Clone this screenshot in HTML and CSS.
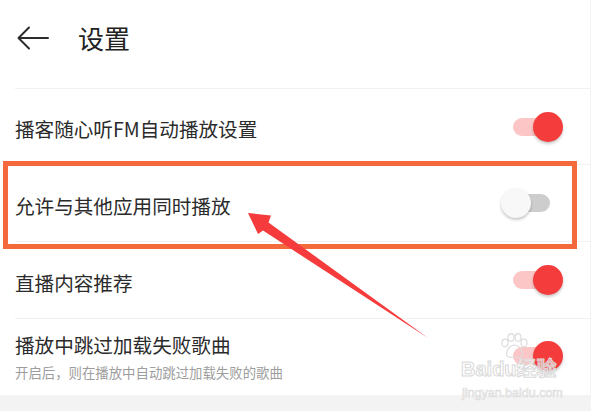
FILE: index.html
```html
<!DOCTYPE html>
<html lang="zh-CN">
<head>
<meta charset="utf-8">
<link rel="stylesheet" href="styles.css">
</head>
<body>
<div class="page">
  <header class="header">
    <svg class="back" width="32" height="24" viewBox="0 0 32 24">
      <path d="M31 12H2 M12 1.5L1.5 12L12 22.5" fill="none" stroke="#2b2b2b" stroke-width="2" stroke-linecap="round" stroke-linejoin="round"/>
    </svg>
    <h1 class="title">设置</h1>
  </header>
  <div class="list">
    <div class="row row-first">
      <div class="label"><div class="name">播客随心听FM自动播放设置</div></div>
      <div class="switch on"><span class="track"></span><span class="knob"></span></div>
    </div>
    <div class="row">
      <div class="label"><div class="name">允许与其他应用同时播放</div></div>
      <div class="switch off"><span class="track"></span><span class="knob"></span></div>
    </div>
    <div class="row">
      <div class="label"><div class="name">直播内容推荐</div></div>
      <div class="switch on"><span class="track"></span><span class="knob"></span></div>
    </div>
    <div class="row row-sub">
      <div class="label">
        <div class="name">播放中跳过加载失败歌曲</div>
        <div class="desc">开启后，则在播放中自动跳过加载失败的歌曲</div>
      </div>
      <div class="switch on"><span class="track"></span><span class="knob"></span></div>
    </div>
  </div>
  <div class="band"></div>
</div>

<div class="highlight"></div>
<svg class="pointer" width="602" height="411" viewBox="0 0 602 411">
  <polygon points="248,213 271,215.5 268.5,222.5 428,338 263,230.5 258,234" fill="#f53b3b"/>
</svg>
<div class="watermark">
  <svg class="paw" width="30" height="26" viewBox="0 0 30 26">
    <g fill="none" stroke="#dcdcdc" stroke-width="1.2">
      <ellipse cx="6" cy="10" rx="3" ry="3.8"/>
      <ellipse cx="12" cy="4.5" rx="3" ry="3.8"/>
      <ellipse cx="19" cy="4.5" rx="3" ry="3.8"/>
      <ellipse cx="25" cy="10" rx="3" ry="3.8"/>
      <path d="M15.5 12c-5 0-8 6-8 9s3 4 8 3c5 1 8 0 8-3s-3-9-8-9z"/>
    </g>
  </svg>
  <div class="wm-brand">Bai<span class="wm-du">du</span>经验</div>
  <div class="wm-url">jingyan.baidu.com</div>
</div>
</body>
</html>
```

FILE: styles.css
```css
* { box-sizing: border-box; margin: 0; padding: 0; }
html, body { width: 602px; height: 411px; overflow: hidden; background: #fff; }
body { font-family: "Noto Sans CJK SC", "Noto Sans", sans-serif; color: #2b2b2b; position: relative; }

.page { width: 591px; height: 411px; border-right: 1px solid #f4f4f4; display: flex; flex-direction: column; }

.header { height: 88px; display: flex; align-items: center; padding-left: 17px; padding-bottom: 12px; }
.back { display: block; }
.title { font-size: 26px; font-weight: 400; margin-left: 29px; color: #222; line-height: 1; }

.list { margin-left: 15px; }
.row { height: 77px; border-top: 1px solid #f1f1f1; display: flex; align-items: center; justify-content: space-between; padding-right: 27px; }
.row-first { height: 76px; }
.label { padding-top: 5px; }
.name { font-size: 19.6px; line-height: 24px; color: #2b2b2b; }
.desc { font-size: 13.4px; line-height: 18px; color: #9d9d9d; margin-top: 6px; }
.row-sub .label { padding-top: 0; }
.row-sub .switch { margin-top: -2px; }

.switch { position: relative; width: 62px; height: 32px; }
.track { position: absolute; left: 12px; right: 13px; top: 7px; height: 18px; border-radius: 9px; }
.knob { position: absolute; top: 1px; width: 30px; height: 30px; border-radius: 50%; box-shadow: 0 2px 3px rgba(0,0,0,0.22); }
.on .track { background: #fcc6c6; }
.on .knob { right: 0; background: #f53c3c; }
.off .track { background: #cdcdcd; }
.off .knob { left: 0; background: #f8f8f8; }

.band { flex: 1; background: #f3f3f3; }

.highlight { position: absolute; left: 3px; top: 161px; width: 574px; height: 88px; border: 5px solid #f46a3c; }
.pointer { position: absolute; left: 0; top: 0; }

.watermark { position: absolute; left: 461px; top: 333px; width: 100px; font-family: "Liberation Sans", sans-serif; }
.paw { position: absolute; left: 38px; top: 0; }
.wm-brand { position: absolute; left: 0; top: 24px; font-size: 20px; font-weight: 700; line-height: 24px; color: rgba(255,255,255,0.55); -webkit-text-stroke: 1px #d9d9d9; white-space: nowrap; font-family: "Liberation Sans", "Noto Sans CJK SC", sans-serif; }
.wm-du { letter-spacing: 0; }
.wm-url { position: absolute; left: 1px; top: 53px; font-size: 12.5px; line-height: 14px; color: rgba(255,255,255,0.5); -webkit-text-stroke: 0.7px #dcdcdc; white-space: nowrap; }
```
